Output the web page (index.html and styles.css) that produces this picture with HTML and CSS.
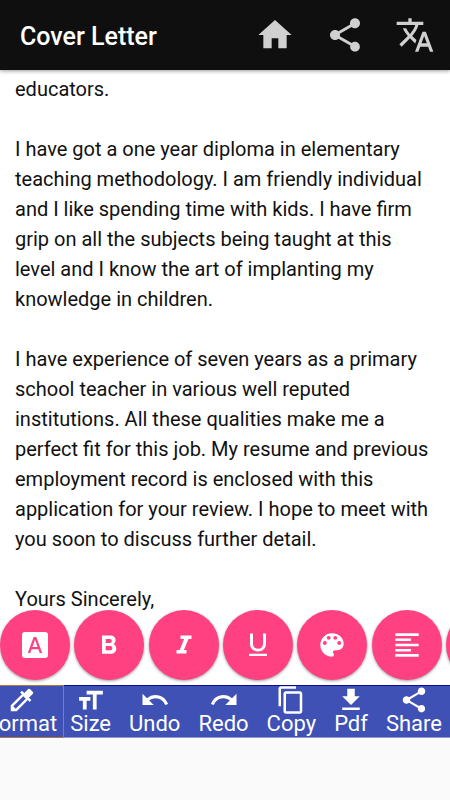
FILE: index.html
```html
<!DOCTYPE html>
<html lang="en">
<head>
    <meta charset="UTF-8">
    <meta name="viewport" content="width=device-width, initial-scale=1.0">
    <title>Cover Letter</title>
    <link rel="stylesheet" href="styles.css">
</head>
<body>
    <header class="header">
        <h1 class="title">Cover Letter</h1>
        <button type="button" class="headerBtn" aria-label="Home">
            <svg viewBox="0 0 24 24"><path d="M10 20v-6h4v6h5v-8h3L12 3 2 12h3v8z"/></svg>
        </button>
        <button type="button" class="headerBtn" aria-label="Share">
            <svg viewBox="0 0 24 24"><path d="M18 16.08c-.76 0-1.44.3-1.96.77L8.91 12.7c.05-.23.09-.46.09-.7s-.04-.47-.09-.7l7.05-4.11c.54.5 1.25.81 2.04.81 1.66 0 3-1.34 3-3s-1.34-3-3-3-3 1.34-3 3c0 .24.04.47.09.7L8.04 9.81C7.5 9.31 6.79 9 6 9c-1.66 0-3 1.34-3 3s1.34 3 3 3c.79 0 1.5-.31 2.04-.81l7.12 4.16c-.05.21-.08.43-.08.65 0 1.61 1.31 2.92 2.92 2.92s2.92-1.31 2.92-2.92-1.31-2.92-2.92-2.92z"/></svg>
        </button>
        <button type="button" class="headerBtn" aria-label="Translate">
            <svg viewBox="0 0 24 24"><path d="M12.87 15.07l-2.54-2.51.03-.03c1.74-1.94 2.98-4.17 3.71-6.53H17V4h-7V2H8v2H1v1.99h11.17C11.5 7.92 10.44 9.75 9 11.35 8.07 10.32 7.3 9.19 6.69 8h-2c.73 1.63 1.73 3.17 2.98 4.56l-5.09 5.02L4 19l5-5 3.11 3.11.76-2.04zM18.5 10h-2L12 22h2l1.12-3h4.75L21 22h2l-4.5-12zm-2.62 7l1.62-4.33L19.12 17h-3.24z"/></svg>
        </button>
    </header>
    <main class="letter">
        <p>educators.</p>
        <p>I have got a one year diploma in elementary teaching methodology. I am friendly individual and I like spending time with kids. I have firm grip on all the subjects being taught at this level and I know the art of implanting my knowledge in children.</p>
        <p>I have experience of seven years as a primary school teacher in various well reputed institutions. All these qualities make me a perfect fit for this job. My resume and previous employment record is enclosed with this application for your review. I hope to meet with you soon to discuss further detail.</p>
        <p>Yours Sincerely,</p>
    </main>
    <div class="styleBar">
        <div class="styleList">
            <button type="button" class="fab" aria-label="Font">
                <svg viewBox="0 0 26 26"><path fill-rule="evenodd" d="M3 0h20a3 3 0 0 1 3 3v20a3 3 0 0 1-3 3H3a3 3 0 0 1-3-3V3a3 3 0 0 1 3-3zM11.700 5L5.800 21h2.500l1.300-3.700h6.800l1.300 3.700h2.500L14.300 5zM13 7.800l2.600 7.300h-5.200z"/></svg>
            </button>
            <button type="button" class="fab" aria-label="Bold">
                <svg viewBox="0 0 26 26"><path fill-rule="evenodd" d="M6 3.500h8.200c3.300 0 5.400 1.900 5.400 4.700 0 1.800-.9 3.200-2.300 3.900 1.900.7 3 2.300 3 4.300 0 3.100-2.200 5.300-5.600 5.300H6zM9.700 6.900v4h4c1.300 0 2.100-.8 2.100-2s-.8-2-2.100-2zM9.700 14.100v4.200h4.400c1.400 0 2.200-.8 2.200-2.100s-.8-2.100-2.200-2.100z"/></svg>
            </button>
            <button type="button" class="fab" aria-label="Italic">
                <svg viewBox="0 0 26 26"><path d="M9.500 3.500h11v3.600h-3l-4.600 10.800h2.600v3.600h-10v-3.600h3.200l4.400-10.800H9.500z"/></svg>
            </button>
            <button type="button" class="fab" aria-label="Underline">
                <svg viewBox="0 0 26 26"><path d="M13 19.500c4.500 0 8-3.300 8-7.500V1.500h-3V12c0 2.900-2 4.800-5 4.800S8 14.900 8 12V1.500H5V12c0 4.200 3.500 7.500 8 7.500zM4 21.700h18V24H4z"/></svg>
            </button>
            <button type="button" class="fab" aria-label="Colour">
                <svg viewBox="2 2 20 20"><path d="M12 3a9 9 0 0 0 0 18c.83 0 1.500-.67 1.500-1.500 0-.39-.15-.74-.39-1.010-.23-.26-.38-.61-.38-.99 0-.83.67-1.500 1.500-1.500H16c2.760 0 5-2.240 5-5 0-4.420-4.030-8-9-8zm-5.500 9a1.500 1.500 0 1 1 0-3 1.500 1.500 0 0 1 0 3zm3-4a1.500 1.500 0 1 1 0-3 1.500 1.500 0 0 1 0 3zm5 0a1.500 1.500 0 1 1 0-3 1.500 1.500 0 0 1 0 3zm3 4a1.500 1.500 0 1 1 0-3 1.500 1.500 0 0 1 0 3z"/></svg>
            </button>
            <button type="button" class="fab" aria-label="Align left">
                <svg viewBox="2 2 20 20"><path d="M15 15H3v2h12v-2zm0-8H3v2h12V7zM3 13h18v-2H3v2zm0 8h18v-2H3v2zM3 3v2h18V3H3z"/></svg>
            </button>
            <button type="button" class="fab" aria-label="Align center">
                <svg viewBox="2 2 20 20"><path d="M7 15v2h10v-2H7zm-4 6h18v-2H3v2zm0-8h18v-2H3v2zm4-6v2h10V7H7zM3 3v2h18V3H3z"/></svg>
            </button>
        </div>
    </div>
    <nav class="toolbar">
        <button type="button" class="tool active">
            <svg viewBox="0 0 24 24"><path d="M20.710 5.630l-2.340-2.340a1 1 0 0 0-1.410 0l-3.120 3.120-1.930-1.910-1.410 1.410 1.420 1.420L3 16.250V21h4.750l8.920-8.920 1.420 1.420 1.410-1.410-1.920-1.920 3.120-3.120c.4-.4.4-1.030.01-1.420zM6.920 19L5 17.080l8.060-8.060 1.920 1.920L6.920 19z"/></svg>
            Format
        </button>
        <button type="button" class="tool">
            <svg viewBox="0 0 24 24"><path d="M9 4v3h5v12h3V7h5V4H9zm-6 8h3v7h3v-7h3V9H3v3z" transform="translate(-.5 .5)"/></svg>
            Size
        </button>
        <button type="button" class="tool">
            <svg viewBox="0 0 24 24"><path d="M12.500 8c-2.650 0-5.050.99-6.900 2.600L2 7v9h9l-3.620-3.620c1.390-1.160 3.160-1.880 5.120-1.880 3.540 0 6.550 2.310 7.600 5.500l2.370-.78C21.080 11.030 17.150 8 12.500 8z"/></svg>
            Undo
        </button>
        <button type="button" class="tool">
            <svg viewBox="0 0 24 24"><path d="M18.400 10.600C16.550 8.990 14.150 8 11.500 8c-4.650 0-8.580 3.030-9.960 7.220L3.900 16c1.050-3.190 4.050-5.500 7.600-5.500 1.950 0 3.730.72 5.120 1.880L13 16h9V7l-3.600 3.600z"/></svg>
            Redo
        </button>
        <button type="button" class="tool">
            <svg viewBox="0 0 24 24"><path d="M16 1H4c-1.100 0-2 .9-2 2v14h2V3h12V1zm3 4H8c-1.100 0-2 .9-2 2v14c0 1.100.9 2 2 2h11c1.100 0 2-.9 2-2V7c0-1.100-.9-2-2-2zm0 16H8V7h11v14z"/></svg>
            Copy
        </button>
        <button type="button" class="tool">
            <svg viewBox="0 0 24 24"><path d="M19 9h-4V3H9v6H5l7 7 7-7zM5 18v2h14v-2H5z"/></svg>
            Pdf
        </button>
        <button type="button" class="tool">
            <svg viewBox="0 0 24 24"><path d="M18 16.080c-.76 0-1.440.3-1.960.77L8.910 12.700c.05-.23.09-.46.09-.7s-.04-.47-.09-.7l7.050-4.110c.54.5 1.250.81 2.040.81 1.660 0 3-1.340 3-3s-1.340-3-3-3-3 1.340-3 3c0 .24.04.47.09.7L8.040 9.810C7.500 9.310 6.790 9 6 9c-1.660 0-3 1.340-3 3s1.340 3 3 3c.79 0 1.500-.31 2.040-.81l7.120 4.160c-.05.21-.08.43-.08.65 0 1.610 1.310 2.920 2.920 2.920s2.920-1.310 2.920-2.920-1.310-2.920-2.920-2.920z"/></svg>
            Share
        </button>
    </nav>
</body>
</html>
```
FILE: styles.css
```css
*{
    box-sizing: border-box;
}
body{
    margin: 0;
    height: 100vh;
    display: flex;
    flex-direction: column;
    overflow: hidden;
    background-color: #fafafa;
    font-family: Roboto, "Liberation Sans", sans-serif;
}
button{
    border: 0;
    padding: 0;
    background: none;
    font: inherit;
    cursor: pointer;
}
svg{
    display: block;
    fill: currentColor;
}
.header{
    flex: none;
    height: 70px;
    padding: 0 15px 0 20px;
    display: flex;
    align-items: center;
    gap: 30px;
    background-color: #0f0f0f;
    box-shadow: 0 1px 4px rgba(0, 0, 0, 0.4);
    z-index: 10;
}
.title{
    flex: 1;
    margin: 0;
    padding-top: 4px;
    color: #fff;
    font-size: 25px;
    font-weight: 500;
    line-height: 30px;
}
.headerBtn{
    width: 40px;
    height: 40px;
    color: #d0d0d0;
}
/* the letter is scrolled to its end */
.letter{
    flex: 1;
    min-height: 0;
    padding: 0 15px 1px;
    display: flex;
    flex-direction: column;
    justify-content: flex-end;
    gap: 30px;
    overflow: hidden;
    background-color: #fff;
    color: #111;
    font-size: 20px;
    line-height: 30px;
}
.letter p{
    margin: 0;
}
.styleBar{
    flex: none;
    height: 75px;
    margin-top: -5px;
    overflow: hidden;
    background: linear-gradient(transparent 5px, #fff 5px);
}
.styleList{
    width: 516px;
    display: flex;
    justify-content: space-between;
}
.fab{
    flex: none;
    width: 70px;
    height: 70px;
    display: flex;
    align-items: center;
    justify-content: center;
    border-radius: 50%;
    background-color: #ff4081;
    color: #fff;
    box-shadow: 0 1px 3px rgba(0, 0, 0, 0.4);
}
.fab svg{
    width: 26px;
    height: 26px;
}
.toolbar{
    flex: none;
    height: 53px;
    margin-bottom: 62px;
    display: flex;
    justify-content: flex-end;
    gap: 2px;
    border-top: 1px solid #0a0a9c;
    border-bottom: 1px solid #8f9ad6;
    background-color: #3f51b5;
}
.tool{
    flex: none;
    padding: 0 8px;
    display: flex;
    flex-direction: column;
    align-items: center;
    justify-content: flex-start;
    color: #fff;
    font-size: 22px;
    line-height: 22px;
}
.tool svg{
    width: 30px;
    height: 30px;
    margin: -1px 0 -2px;
}
/* selected tool gets an orange frame over the bar's own edge */
.tool.active{
    margin: -1px -4px -1px 0;
    padding-right: 6px;
    border: 1px solid #b07a3c;
}
```
